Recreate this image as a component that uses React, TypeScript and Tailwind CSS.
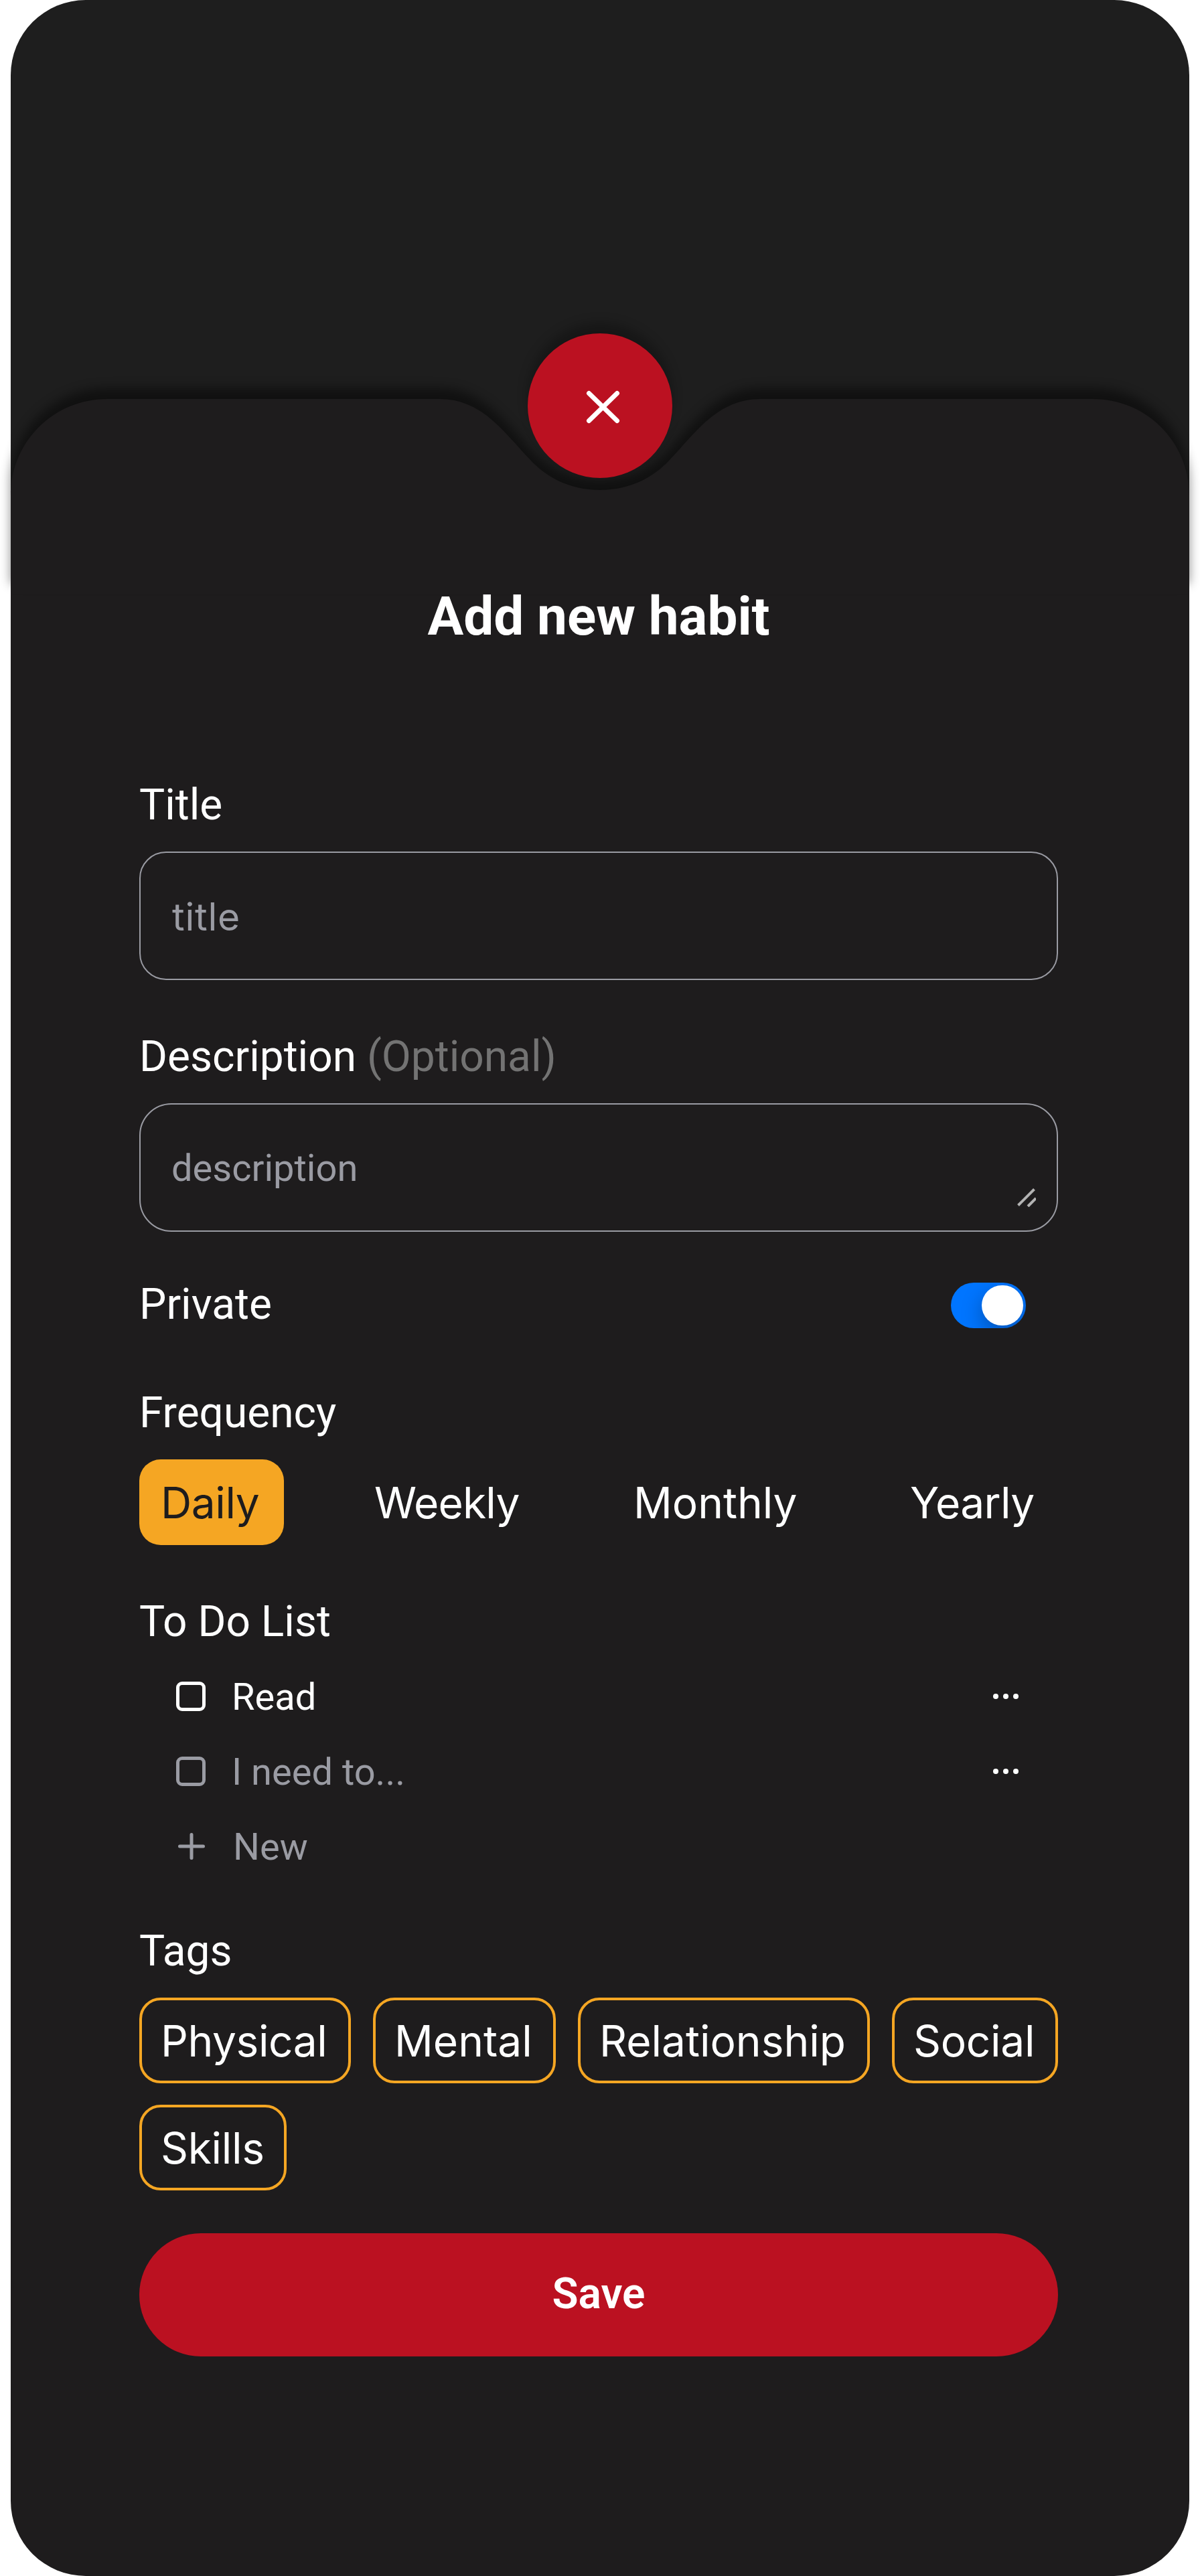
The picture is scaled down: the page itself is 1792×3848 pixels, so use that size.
import React from "react";

const frequencies = [
  { name: "Daily", width: "w-[216px]", tracking: "tracking-[-0.4px]" },
  { name: "Weekly", width: "w-[284px]", tracking: "tracking-[-0.8px]" },
  { name: "Monthly", width: "w-[310px]", tracking: "tracking-normal" },
  { name: "Yearly", width: "w-[250px]", tracking: "tracking-[-0.6px]" },
];

const tags = [
  { name: "Physical", width: "w-[316px]", tracking: "tracking-[-0.4px]" },
  { name: "Mental", width: "w-[273px]", tracking: "tracking-normal" },
  { name: "Relationship", width: "w-[436px]", tracking: "tracking-normal" },
  { name: "Social", width: "w-[248px]", tracking: "tracking-[-0.3px]" },
  { name: "Skills", width: "w-[220px]", tracking: "tracking-[-0.3px]" },
];

function Label({ children, className = "" }: { children: React.ReactNode; className?: string }) {
  return (
    <div className={`h-[72px] pt-px text-[64px] leading-[72px] whitespace-nowrap text-white ${className}`}>
      {children}
    </div>
  );
}

function SheetTop() {
  return (
    <svg
      className="absolute top-[596px] -left-4 overflow-visible"
      width="1792"
      height="292"
      viewBox="0 596 1792 292"
      aria-hidden="true"
    >
      <defs>
        <filter
          id="sheet"
          filterUnits="userSpaceOnUse"
          colorInterpolationFilters="sRGB"
          x="-40"
          y="540"
          width="1872"
          height="400"
        >
          <feDropShadow dx="0" dy="-16" stdDeviation="8" floodColor="#000" floodOpacity="0.45" />
        </filter>
      </defs>
      <path
        filter="url(#sheet)"
        fill="#1e1c1d"
        d="M16 740C16 660 80 596 160 596H656C720 596 752 645 792 687C815 712 850 732 896 732C942 732 977 712 1000 687C1040 645 1072 596 1136 596H1632C1712 596 1776 660 1776 740V888H16Z"
      />
    </svg>
  );
}

function Dots() {
  return (
    <svg width="38" height="8" viewBox="0 0 38 8" fill="#fff" aria-hidden="true">
      <circle cx="4" cy="4" r="4" />
      <circle cx="19" cy="4" r="4" />
      <circle cx="34" cy="4" r="4" />
    </svg>
  );
}

function Todo({ text, color, box }: { text: string; color: string; box: string }) {
  return (
    <div className={`flex h-28 items-center pr-[59px] pl-[55px] text-[56px] ${color}`}>
      <span className={`size-11 rounded-[9px] border-[5px] ${box}`} />
      <span className="ml-[39px] flex-1 pt-px">{text}</span>
      <Dots />
    </div>
  );
}

export default function App() {
  return (
    <div className="h-[3848px] w-[1792px] overflow-hidden bg-white px-4 font-['Roboto',sans-serif]">
      <div className="relative h-full rounded-[112px] bg-[linear-gradient(#1e1e1e_0_880px,#1e1c1d_880px)]">
        <SheetTop />
        <button
          aria-label="Close"
          className="absolute top-[498px] left-[772px] flex size-[216px] items-center justify-center rounded-full bg-[#bb1121] shadow-[0_-16px_16px_rgba(0,0,0,0.25)]"
        >
          <svg width="216" height="216" viewBox="0 0 216 216" fill="none" stroke="#fff" strokeWidth="7" strokeLinecap="round">
            <path d="M91.500 89.500L133.500 130.500M133.500 89.500L91.500 130.500" />
          </svg>
        </button>

        <form className="relative mx-48 flex w-[1372px] flex-col pt-[873px]">
          <h1 className="h-24 text-center text-[80px] leading-[96px] font-bold text-white">Add new habit</h1>

          <Label className="mt-[197px]">Title</Label>
          <div className="mt-[34px] flex h-48 items-center rounded-[40px] border-2 border-[#9a9ba3] pt-[3px] pl-[47px] font-['Inter',sans-serif] text-[57px] tracking-[0.8px] text-[#9a9ba3]">
            title
          </div>

          <Label className="mt-[78px]">
            Description <span className="text-[#737373]">(Optional)</span>
          </Label>
          <div className="relative mt-[34px] flex h-48 items-center rounded-[48px] border-2 border-[#9a9ba3] pl-[46px] text-[56px] text-[#9a9ba3]">
            <span className="pt-px">description</span>
            <svg className="absolute right-[31px] bottom-[35px]" width="28" height="28" viewBox="0 0 28 28" stroke="#b3b3b3" strokeWidth="4">
              <path d="M1.500 25.500L25.500 1.500M16 27L28 15" />
            </svg>
          </div>

          <div className="mt-[72px] flex h-[72px] items-end justify-between pr-12">
            <Label>Private</Label>
            <span className="flex h-[68px] w-28 justify-end overflow-hidden rounded-full bg-[#0075ff] p-1">
              <span className="h-[60px] w-[62px] rounded-full bg-white shadow-[0_12px_32px_rgba(0,0,0,0.3)]" />
            </span>
          </div>

          <Label className="mt-[90px]">Frequency</Label>
          <div className="mt-[34px] flex gap-[103px] font-['Inter',sans-serif] text-[64px]">
            {frequencies.map((f, i) => (
              <span
                key={f.name}
                className={`flex h-32 shrink-0 items-center rounded-[32px] pt-px pl-8 ${f.width} ${f.tracking} ${i === 0 ? "bg-[#f5a623] text-[#1e1c1d]" : "text-white"}`}
              >
                {f.name}
              </span>
            ))}
          </div>

          <Label className="mt-[78px]">To Do List</Label>
          <div className="mt-5">
            <Todo text="Read" color="text-white" box="border-white" />
            <Todo text="I need to..." color="text-[#9a9ba3]" box="border-[#9a9ba3]" />
            <div className="flex h-28 items-center pl-[58px] text-[56px] text-[#9a9ba3]">
              <svg width="40" height="40" viewBox="0 0 40 40" stroke="currentColor" strokeWidth="5" strokeLinecap="round">
                <path d="M20 2.500V37.500M2.500 20H37.500" />
              </svg>
              <span className="ml-[42px] pt-px">New</span>
            </div>
          </div>

          <Label className="mt-16">Tags</Label>
          <div className="mt-[34px] flex flex-wrap gap-x-[33px] gap-y-8 font-['Inter',sans-serif] text-[64px] text-white">
            {tags.map((t) => (
              <span
                key={t.name}
                className={`flex h-32 items-center rounded-[32px] border-4 border-[#f5a623] pt-px pl-7 ${t.width} ${t.tracking}`}
              >
                {t.name}
              </span>
            ))}
          </div>

          <button type="button" className="mt-16 h-[184px] rounded-full bg-[#bb1121] pb-0.5 text-[64px] font-semibold text-white">
            Save
          </button>
        </form>
      </div>
    </div>
  );
}
